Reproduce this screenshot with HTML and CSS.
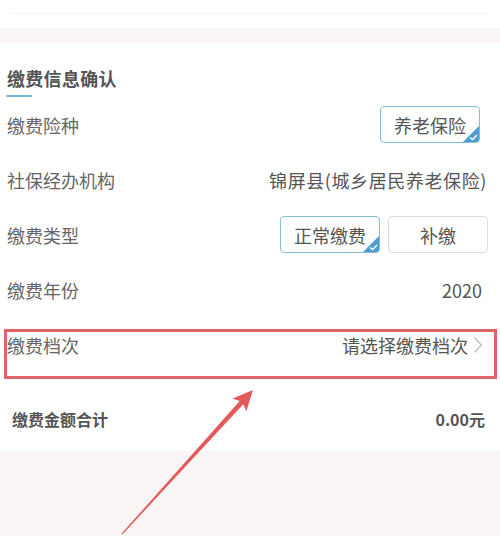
FILE: index.html
```html
<!DOCTYPE html>
<html lang="zh-CN">
<head>
    <meta charset="UTF-8">
    <meta name="viewport" content="width=device-width, initial-scale=1.0">
    <title>缴费信息确认</title>
    <link rel="stylesheet" href="styles.css">
</head>
<body>
<div class="page">
    <div class="top-strip"><div class="top-line"></div></div>

    <section class="card">
        <div class="card-title">缴费信息确认</div>
        <div class="title-bar"></div>

        <div class="row">
            <span class="label">缴费险种</span>
            <span class="tag tag-on tag-single">养老保险
                <svg class="tick" viewBox="0 0 16 16"><path d="M16 0 L16 16 L0 16 Z" fill="#4d9dd2"/><path d="M7 11.5 L9.5 13.5 L14 9" fill="none" stroke="#fff" stroke-width="1.4"/></svg>
            </span>
        </div>

        <div class="row">
            <span class="label">社保经办机构</span>
            <span class="value value-wide">锦屏县(城乡居民养老保险)</span>
        </div>

        <div class="row">
            <span class="label">缴费类型</span>
            <span class="tags">
                <span class="tag tag-on">正常缴费
                    <svg class="tick" viewBox="0 0 16 16"><path d="M16 0 L16 16 L0 16 Z" fill="#4d9dd2"/><path d="M7 11.5 L9.5 13.5 L14 9" fill="none" stroke="#fff" stroke-width="1.4"/></svg>
                </span>
                <span class="tag">补缴</span>
            </span>
        </div>

        <div class="row">
            <span class="label">缴费年份</span>
            <span class="value value-num">2020</span>
        </div>

        <div class="row">
            <span class="label">缴费档次</span>
            <span class="value picker">请选择缴费档次
                <svg class="chevron" viewBox="0 0 10 18"><path d="M1.5 1.5 L8.5 9 L1.5 16.5" fill="none" stroke="#bcbcbc" stroke-width="1.3"/></svg>
            </span>
        </div>

        <div class="total-row">
            <span class="total-label">缴费金额合计</span>
            <span class="total-value">0.00元</span>
        </div>
    </section>

    <div class="highlight"></div>
    <svg class="arrow" viewBox="0 0 500 536">
        <polygon points="121.6,533.6 239.7,400.9 232.5,398.5 253,390 246.3,411.3 243.3,404.3 122.4,534.4" fill="#e45a5a"/>
    </svg>
</div>
</body>
</html>
```

FILE: styles.css
```css
body { margin: 0; background: #f8f5f4; font-family: "Noto Sans CJK SC", "Noto Sans", sans-serif; color: #555; }
.page { position: relative; width: 500px; height: 536px; overflow: hidden; }

.top-strip { height: 28px; background: #fff; padding-top: 13px; box-sizing: border-box; }
.top-line { margin: 0 10px; height: 1px; background: #f6f6f6; }

.card { margin-top: 15px; background: #fff; padding-bottom: 1px; }
.card-title { padding: 23px 0 0 7px; font-size: 18px; font-weight: bold; line-height: 25px; color: #555; letter-spacing: 0.3px; }
.title-bar { margin: 4px 0 0 6px; width: 26px; height: 2px; background: #74b6d2; border-radius: 1px; }

.row { display: flex; align-items: center; justify-content: space-between; height: 55px; padding: 0 13px 0 7px; }
.label { font-size: 18px; color: #666; }
.value { font-size: 18px; color: #555; }
.value-wide { letter-spacing: 0.6px; margin-right: 0; }
.value-num { margin-right: 5px; }
.picker { display: flex; align-items: center; gap: 5px; margin-right: 4px; }
.chevron { width: 10px; height: 18px; }

.tags { display: flex; gap: 8px; margin-right: -1px; }
.tag { position: relative; display: flex; align-items: center; justify-content: center; width: 100px; height: 37px; box-sizing: border-box; border: 1.5px solid #dcdcdc; border-radius: 4px; font-size: 18px; color: #555; overflow: hidden; }
.tag-on { border-color: #86bdd6; }
.tag-single { margin-right: 7px; }
.tick { position: absolute; right: 0; bottom: 0; width: 16px; height: 16px; }

.total-row { display: flex; align-items: center; justify-content: space-between; height: 62px; margin-top: 16px; padding: 0 15px 0 12px; font-size: 16px; font-weight: bold; color: #555; }

.highlight { position: absolute; left: 4px; top: 329px; width: 493px; height: 50px; box-sizing: border-box; border: 3px solid #e06467; }
.arrow { position: absolute; left: 0; top: 0; width: 500px; height: 536px; }
```
